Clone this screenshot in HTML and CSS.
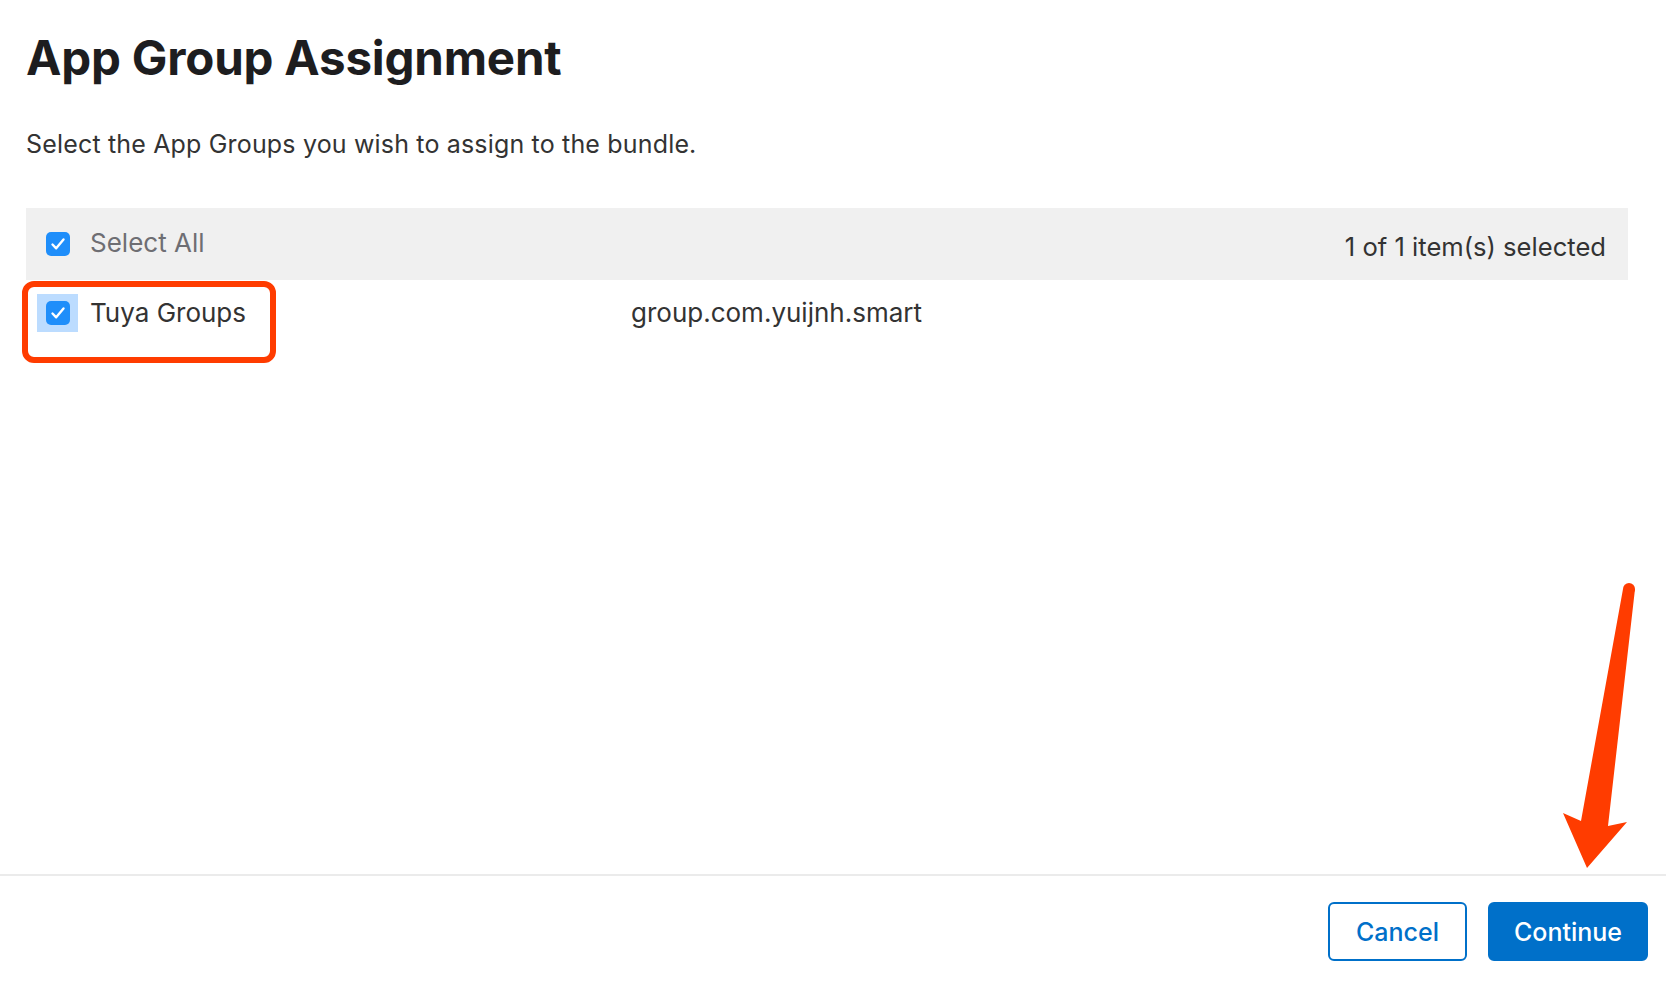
FILE: index.html
```html
<!DOCTYPE html>
<html>
<head>
<meta charset="utf-8">
<link rel="stylesheet" href="styles.css">
</head>
<body>
<div class="page">
  <main class="content">
    <h1 class="title">App Group Assignment</h1>
    <p class="subtitle">Select the App Groups you wish to assign to the bundle.</p>
    <div class="table">
      <div class="table-head">
        <label class="select-all">
          <span class="checkbox"><svg viewBox="0 0 24 24" width="24" height="24"><path d="M6.5 12.5 L10.2 16.3 L17.5 7.5" fill="none" stroke="#fff" stroke-width="2.4" stroke-linecap="round" stroke-linejoin="round"/></svg></span>
          <span class="select-all-label">Select All</span>
        </label>
        <span class="count">1 of 1 item(s) selected</span>
      </div>
      <div class="table-row">
        <div class="cell-name">
          <span class="focus"><span class="checkbox"><svg viewBox="0 0 24 24" width="24" height="24"><path d="M6.5 12.5 L10.2 16.3 L17.5 7.5" fill="none" stroke="#fff" stroke-width="2.4" stroke-linecap="round" stroke-linejoin="round"/></svg></span></span>
          <span class="name">Tuya Groups</span>
        </div>
        <div class="cell-id">group.com.yuijnh.smart</div>
        <div class="highlight"></div>
      </div>
    </div>
  </main>
  <footer class="footer">
    <button class="btn btn-secondary">Cancel</button>
    <button class="btn btn-primary">Continue</button>
  </footer>
  <svg class="arrow" width="1666" height="984" viewBox="0 0 1666 984">
    <polygon fill="#ff3c00" points="1623,589 1635,589 1608,826 1627,822 1587,868 1563,813 1581,821"/>
    <circle fill="#ff3c00" cx="1629" cy="589" r="6"/>
  </svg>
</div>
</body>
</html>
```
FILE: styles.css
```css
* { box-sizing: border-box; }
html, body { margin: 0; padding: 0; background: #fff; }
body {
  font-family: Inter, "Noto Sans", "Liberation Sans", sans-serif;
  color: #333;
}
.page {
  position: relative;
  width: 1666px;
  height: 984px;
  display: flex;
  flex-direction: column;
}
.content {
  flex: 1;
  padding: 0 38px 0 26px;
}
.title {
  margin: 0;
  padding-top: 30px;
  font-size: 47.5px;
  line-height: 56px;
  font-weight: 700;
  color: #1d1d1f;
  letter-spacing: -0.2px;
}
.subtitle {
  margin: 0;
  padding-top: 43px;
  font-size: 25px;
  line-height: 30px;
  letter-spacing: 0.17px;
  color: #333;
}
.table { margin-top: 49px; }
.table-head {
  height: 72px;
  background: #f0f0f0;
  display: flex;
  align-items: center;
  justify-content: space-between;
  padding: 0 22px 0 20px;
}
.select-all { display: flex; align-items: center; gap: 20px; }
.select-all-label { font-size: 26px; color: #6e6e73; line-height: 30px; margin-top: -3px; }
.count { font-size: 25.6px; color: #333; line-height: 30px; margin-top: 5px; }
.checkbox {
  width: 24px;
  height: 24px;
  border-radius: 5px;
  background: #1f8efa;
  display: block;
}
.checkbox svg { display: block; }
.table-row {
  position: relative;
  display: grid;
  grid-template-columns: 605px 1fr;
  padding-top: 14px;
}
.cell-name { display: flex; align-items: center; padding-left: 11px; gap: 12px; }
.focus {
  width: 41px;
  height: 38px;
  background: #bcdcff;
  display: flex;
  align-items: center;
  justify-content: center;
}
.name { font-size: 26px; line-height: 30px; color: #333; }
.cell-id { font-size: 26px; line-height: 30px; color: #333; align-self: center; }
.highlight {
  position: absolute;
  left: -4px;
  top: 1px;
  width: 254px;
  height: 82px;
  border: 6px solid #ff3c00;
  border-radius: 12px;
}
.footer {
  border-top: 2px solid #ebebeb;
  padding: 26px 18px 23px 0;
  display: flex;
  justify-content: flex-end;
  gap: 21px;
}
.btn {
  height: 59px;
  border-radius: 6px;
  font-family: inherit;
  font-size: 25px;
  font-weight: 500;
  cursor: pointer;
}
.btn-secondary {
  width: 139px;
  background: #fff;
  color: #0070c9;
  border: 2px solid #0070c9;
}
.btn-primary {
  width: 160px;
  background: #0070c9;
  color: #fff;
  border: 2px solid #0070c9;
}
.arrow {
  position: absolute;
  left: 0;
  top: 0;
  pointer-events: none;
}
```
